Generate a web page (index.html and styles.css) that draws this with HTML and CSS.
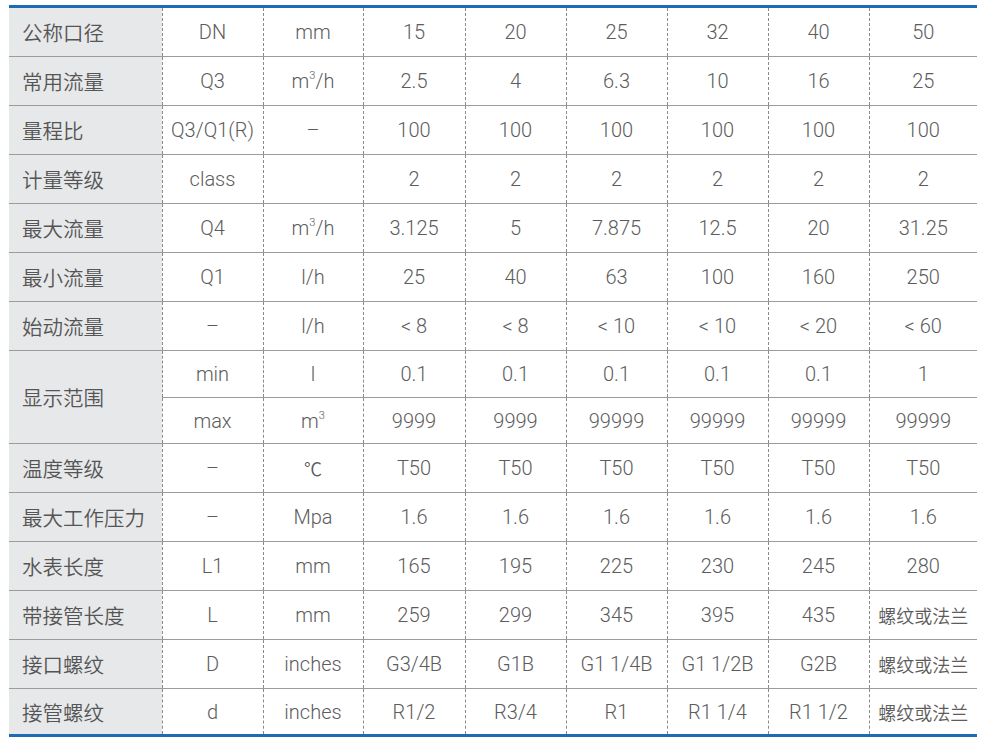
FILE: index.html
```html
<!DOCTYPE html>
<html lang="zh">
<head>
<meta charset="utf-8">
<title>水表参数</title>
<link rel="stylesheet" href="styles.css">
</head>
<body>
<table class="spec">
  <colgroup>
    <col class="c-label"><col class="c-sym"><col class="c-unit">
    <col class="c-v1"><col class="c-v2"><col class="c-v3"><col class="c-v4"><col class="c-v5"><col class="c-v6">
  </colgroup>
  <tbody>
    <tr class="r"><th>公称口径</th><td>DN</td><td>mm</td><td>15</td><td>20</td><td>25</td><td>32</td><td>40</td><td>50</td></tr>
    <tr class="r"><th>常用流量</th><td>Q3</td><td>m<sup>3</sup>/h</td><td>2.5</td><td>4</td><td>6.3</td><td>10</td><td>16</td><td>25</td></tr>
    <tr class="r"><th>量程比</th><td>Q3/Q1(R)</td><td>–</td><td>100</td><td>100</td><td>100</td><td>100</td><td>100</td><td>100</td></tr>
    <tr class="r"><th>计量等级</th><td>class</td><td></td><td>2</td><td>2</td><td>2</td><td>2</td><td>2</td><td>2</td></tr>
    <tr class="r"><th>最大流量</th><td>Q4</td><td>m<sup>3</sup>/h</td><td>3.125</td><td>5</td><td>7.875</td><td>12.5</td><td>20</td><td>31.25</td></tr>
    <tr class="r"><th>最小流量</th><td>Q1</td><td>l/h</td><td>25</td><td>40</td><td>63</td><td>100</td><td>160</td><td>250</td></tr>
    <tr class="r"><th>始动流量</th><td>–</td><td>l/h</td><td>&lt; 8</td><td>&lt; 8</td><td>&lt; 10</td><td>&lt; 10</td><td>&lt; 20</td><td>&lt; 60</td></tr>
    <tr class="s1"><th rowspan="2">显示范围</th><td>min</td><td>l</td><td>0.1</td><td>0.1</td><td>0.1</td><td>0.1</td><td>0.1</td><td>1</td></tr>
    <tr class="s2"><td>max</td><td>m<sup>3</sup></td><td>9999</td><td>9999</td><td>99999</td><td>99999</td><td>99999</td><td>99999</td></tr>
    <tr class="r"><th>温度等级</th><td>–</td><td class="cn">℃</td><td>T50</td><td>T50</td><td>T50</td><td>T50</td><td>T50</td><td>T50</td></tr>
    <tr class="r"><th>最大工作压力</th><td>–</td><td>Mpa</td><td>1.6</td><td>1.6</td><td>1.6</td><td>1.6</td><td>1.6</td><td>1.6</td></tr>
    <tr class="r"><th>水表长度</th><td>L1</td><td>mm</td><td>165</td><td>195</td><td>225</td><td>230</td><td>245</td><td>280</td></tr>
    <tr class="r"><th>带接管长度</th><td>L</td><td>mm</td><td>259</td><td>299</td><td>345</td><td>395</td><td>435</td><td class="cn">螺纹或法兰</td></tr>
    <tr class="r"><th>接口螺纹</th><td>D</td><td>inches</td><td>G3/4B</td><td>G1B</td><td>G1 1/4B</td><td>G1 1/2B</td><td>G2B</td><td class="cn">螺纹或法兰</td></tr>
    <tr class="r last"><th>接管螺纹</th><td>d</td><td>inches</td><td>R1/2</td><td>R3/4</td><td>R1</td><td>R1 1/4</td><td>R1 1/2</td><td class="cn">螺纹或法兰</td></tr>
  </tbody>
</table>
</body>
</html>
```

FILE: styles.css
```css
html, body {
  margin: 0;
  padding: 0;
  background: #ffffff;
}

body {
  padding: 5px 9px 0 9px;
  font-family: "Roboto", "Liberation Sans", "Noto Sans CJK SC", sans-serif;
  color: #5c5c5c;
}

.spec {
  border-collapse: collapse;
  table-layout: fixed;
  width: 968px;
  border-top: 3px solid #1b6cb3;
  border-bottom: 3px solid #1b6cb3;
}

.c-label { width: 153px; }
.c-sym { width: 101px; }
.c-unit { width: 100px; }
.c-v1 { width: 102px; }
.c-v2, .c-v3, .c-v4, .c-v5 { width: 101px; }
.c-v6 { width: 108px; }

.spec th,
.spec td {
  padding: 0;
  font-size: 20px;
  font-weight: 300;
  line-height: 24px;
  text-align: center;
  vertical-align: middle;
  white-space: nowrap;
  border-bottom: 1px solid #9c9c9c;
  border-left: 1px dashed #8a8a8a;
}

.spec th {
  background: #e7e8ea;
  text-align: left;
  padding-left: 13px;
  border-left: none;
  font-family: "Noto Sans CJK SC", sans-serif;
  font-size: 20.5px;
  font-weight: 350;
  color: #555555;
}

.spec td.cn {
  font-family: "Noto Sans CJK SC", sans-serif;
  font-size: 18px;
  font-weight: 350;
}

.r td, .r th { height: 48px; }
.s1 td { height: 46px; }
.s2 td { height: 45px; }
.last td, .last th { height: 45px; }

sup {
  font-size: 11px;
  line-height: 0;
  vertical-align: 9px;
}
```
